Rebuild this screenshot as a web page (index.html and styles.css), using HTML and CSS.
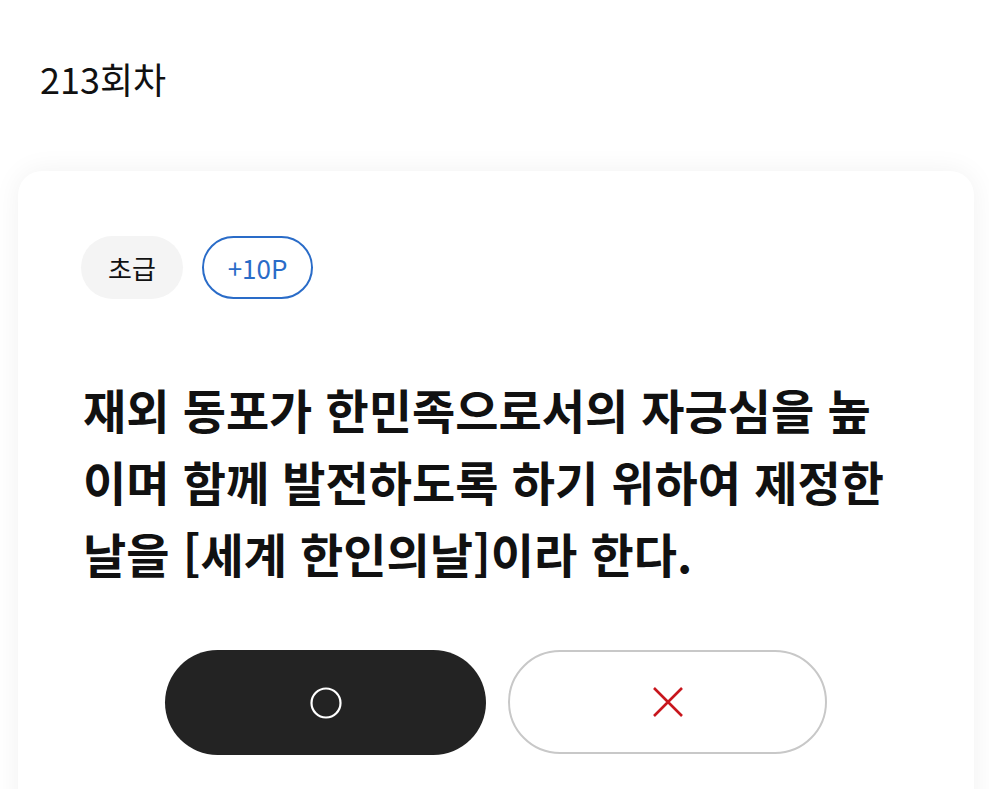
FILE: index.html
```html
<!DOCTYPE html>
<html lang="ko">
<head>
<meta charset="utf-8">
<link rel="stylesheet" href="styles.css">
</head>
<body>
<header class="top">
  <h1 class="round">213회차</h1>
</header>
<main class="card">
  <div class="tags">
    <span class="tag tag-level">초급</span>
    <span class="tag tag-point">+10P</span>
  </div>
  <p class="question">재외 동포가 한민족으로서의 자긍심을 높이며 함께 발전하도록 하기 위하여 제정한 날을 [세계 한인의날]이라 한다.</p>
  <div class="answers">
    <button class="btn btn-o" type="button" aria-label="O">
      <svg width="34" height="34" viewBox="0 0 34 34"><circle cx="17" cy="17" r="14.5" fill="none" stroke="#fff" stroke-width="2.2"/></svg>
    </button>
    <button class="btn btn-x" type="button" aria-label="X">
      <svg width="32" height="32" viewBox="0 0 32 32"><path d="M2 2 L30 30 M30 2 L2 30" stroke="#c8161d" stroke-width="2.6" fill="none"/></svg>
    </button>
  </div>
</main>
</body>
</html>
```
FILE: styles.css
```css
* { box-sizing: border-box; }
html, body { margin: 0; padding: 0; background: #fff; }
body {
  font-family: "Noto Sans CJK KR", "Noto Sans", sans-serif;
  color: #111;
  overflow: hidden;
  height: 789px;
}
.top {
  padding: 53px 40px 0;
  height: 171px;
}
.round {
  margin: 0;
  font-size: 36px;
  font-weight: 400;
  line-height: 50px;
}
.card {
  margin: 0 15px 0 18px;
  background: #fff;
  border-radius: 24px;
  box-shadow: 0 0 28px rgba(0, 0, 0, 0.06);
  padding: 65px 63px 80px;
  min-height: 700px;
}
.tags {
  display: flex;
  gap: 19px;
}
.tag {
  display: inline-flex;
  align-items: center;
  justify-content: center;
  height: 63px;
  border-radius: 32px;
  font-size: 26px;
}
.tag-level {
  width: 102px;
  background: #f4f4f4;
  color: #111;
}
.tag-point {
  width: 111px;
  border: 2px solid #2a6cc8;
  color: #2a6cc8;
}
.question {
  margin: 74px 0 0 2px;
  font-size: 47px;
  font-weight: 700;
  line-height: 72px;
  color: #111;
  max-width: 815px;
}
.answers {
  display: flex;
  justify-content: center;
  gap: 22px;
  margin-top: 61px;
}
.btn {
  width: 321px;
  height: 105px;
  border-radius: 53px;
  display: flex;
  align-items: center;
  justify-content: center;
  padding: 0;
  cursor: pointer;
}
.btn-o {
  background: #232323;
  border: none;
}
.btn-x {
  width: 319px;
  height: 104px;
  background: #fff;
  border: 2px solid #c8c8c8;
}
```
